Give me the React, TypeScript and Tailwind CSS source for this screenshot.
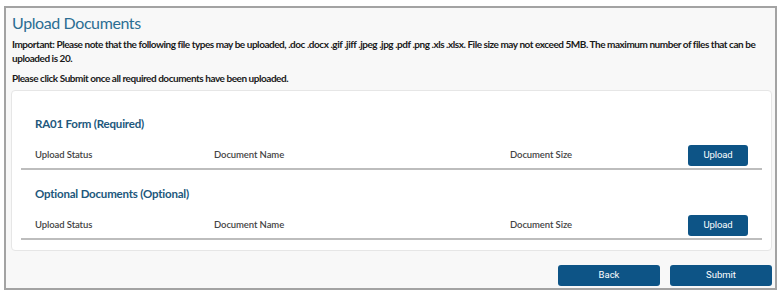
export default function App() {
  const sections = ["RA01 Form (Required)", "Optional Documents (Optional)"];

  return (
    <div className="w-[782px] h-[293px] bg-white pt-[6px] pl-[4px] font-['Lato','Noto_Sans',sans-serif]">
      <div className="w-[773px] h-[284px] border-2 border-[#a3a3a3] bg-[#f8f8f8] pl-[5px] pr-[3px] flex flex-col">
        {/* ── Header ─────────────────────────── */}
        <h1 className="pl-[1px] mt-[3px] text-[16px] leading-[24px] text-[#2b6e93] tracking-[-0.4px]">Upload Documents</h1>
        <p className="pl-[1px] mt-[2px] text-[10px] leading-[14px] font-bold text-[#1a1a1a] tracking-[-0.46px]">
          Important: Please note that the following file types may be uploaded, .doc .docx .gif .jiff .jpeg .jpg .pdf .png .xls .xlsx. File size may not exceed 5MB. The maximum number of files that can be uploaded is 20.
        </p>
        <p className="pl-[1px] mt-[6px] text-[10px] leading-[14px] font-bold text-[#1a1a1a] tracking-[-0.46px]">
          Please click Submit once all required documents have been uploaded.
        </p>

        {/* ── Documents card ─────────────────── */}
        <div className="mt-[5px] rounded-[4px] border border-[#e6e6e6] bg-white px-[9px] pt-[25px] pb-[10px]">
          {sections.map((title, i) => (
            <section key={title} className={i > 0 ? "mt-[16px]" : ""}>
              <h2 className="pl-[14px] text-[11.5px] leading-[16px] font-bold text-[#21577c] tracking-[-0.2px]">{title}</h2>
              <div className="mt-[13px] pb-[2px] border-b-2 border-[#bdbdbd] grid grid-cols-[179px_296px_178px_60px] items-center pl-[14px] text-[9.5px] text-[#444] font-semibold tracking-[-0.1px]">
                <span>Upload Status</span>
                <span>Document Name</span>
                <span>Document Size</span>
                <button className="h-[21px] w-[60px] rounded-[3px] bg-[#0d5486] text-white text-[9.5px] font-normal font-['Roboto',sans-serif]">
                  Upload
                </button>
              </div>
            </section>
          ))}
        </div>

        {/* ── Footer actions ─────────────────── */}
        <div className="mt-[14px] flex justify-end gap-[10px]">
          <button className="h-[21px] w-[102px] rounded-[3px] bg-[#0d5486] text-white text-[9.5px] font-['Roboto',sans-serif]">
            Back
          </button>
          <button className="h-[21px] w-[102px] rounded-[3px] bg-[#0d5486] text-white text-[9.5px] font-['Roboto',sans-serif]">
            Submit
          </button>
        </div>
      </div>
    </div>
  );
}
